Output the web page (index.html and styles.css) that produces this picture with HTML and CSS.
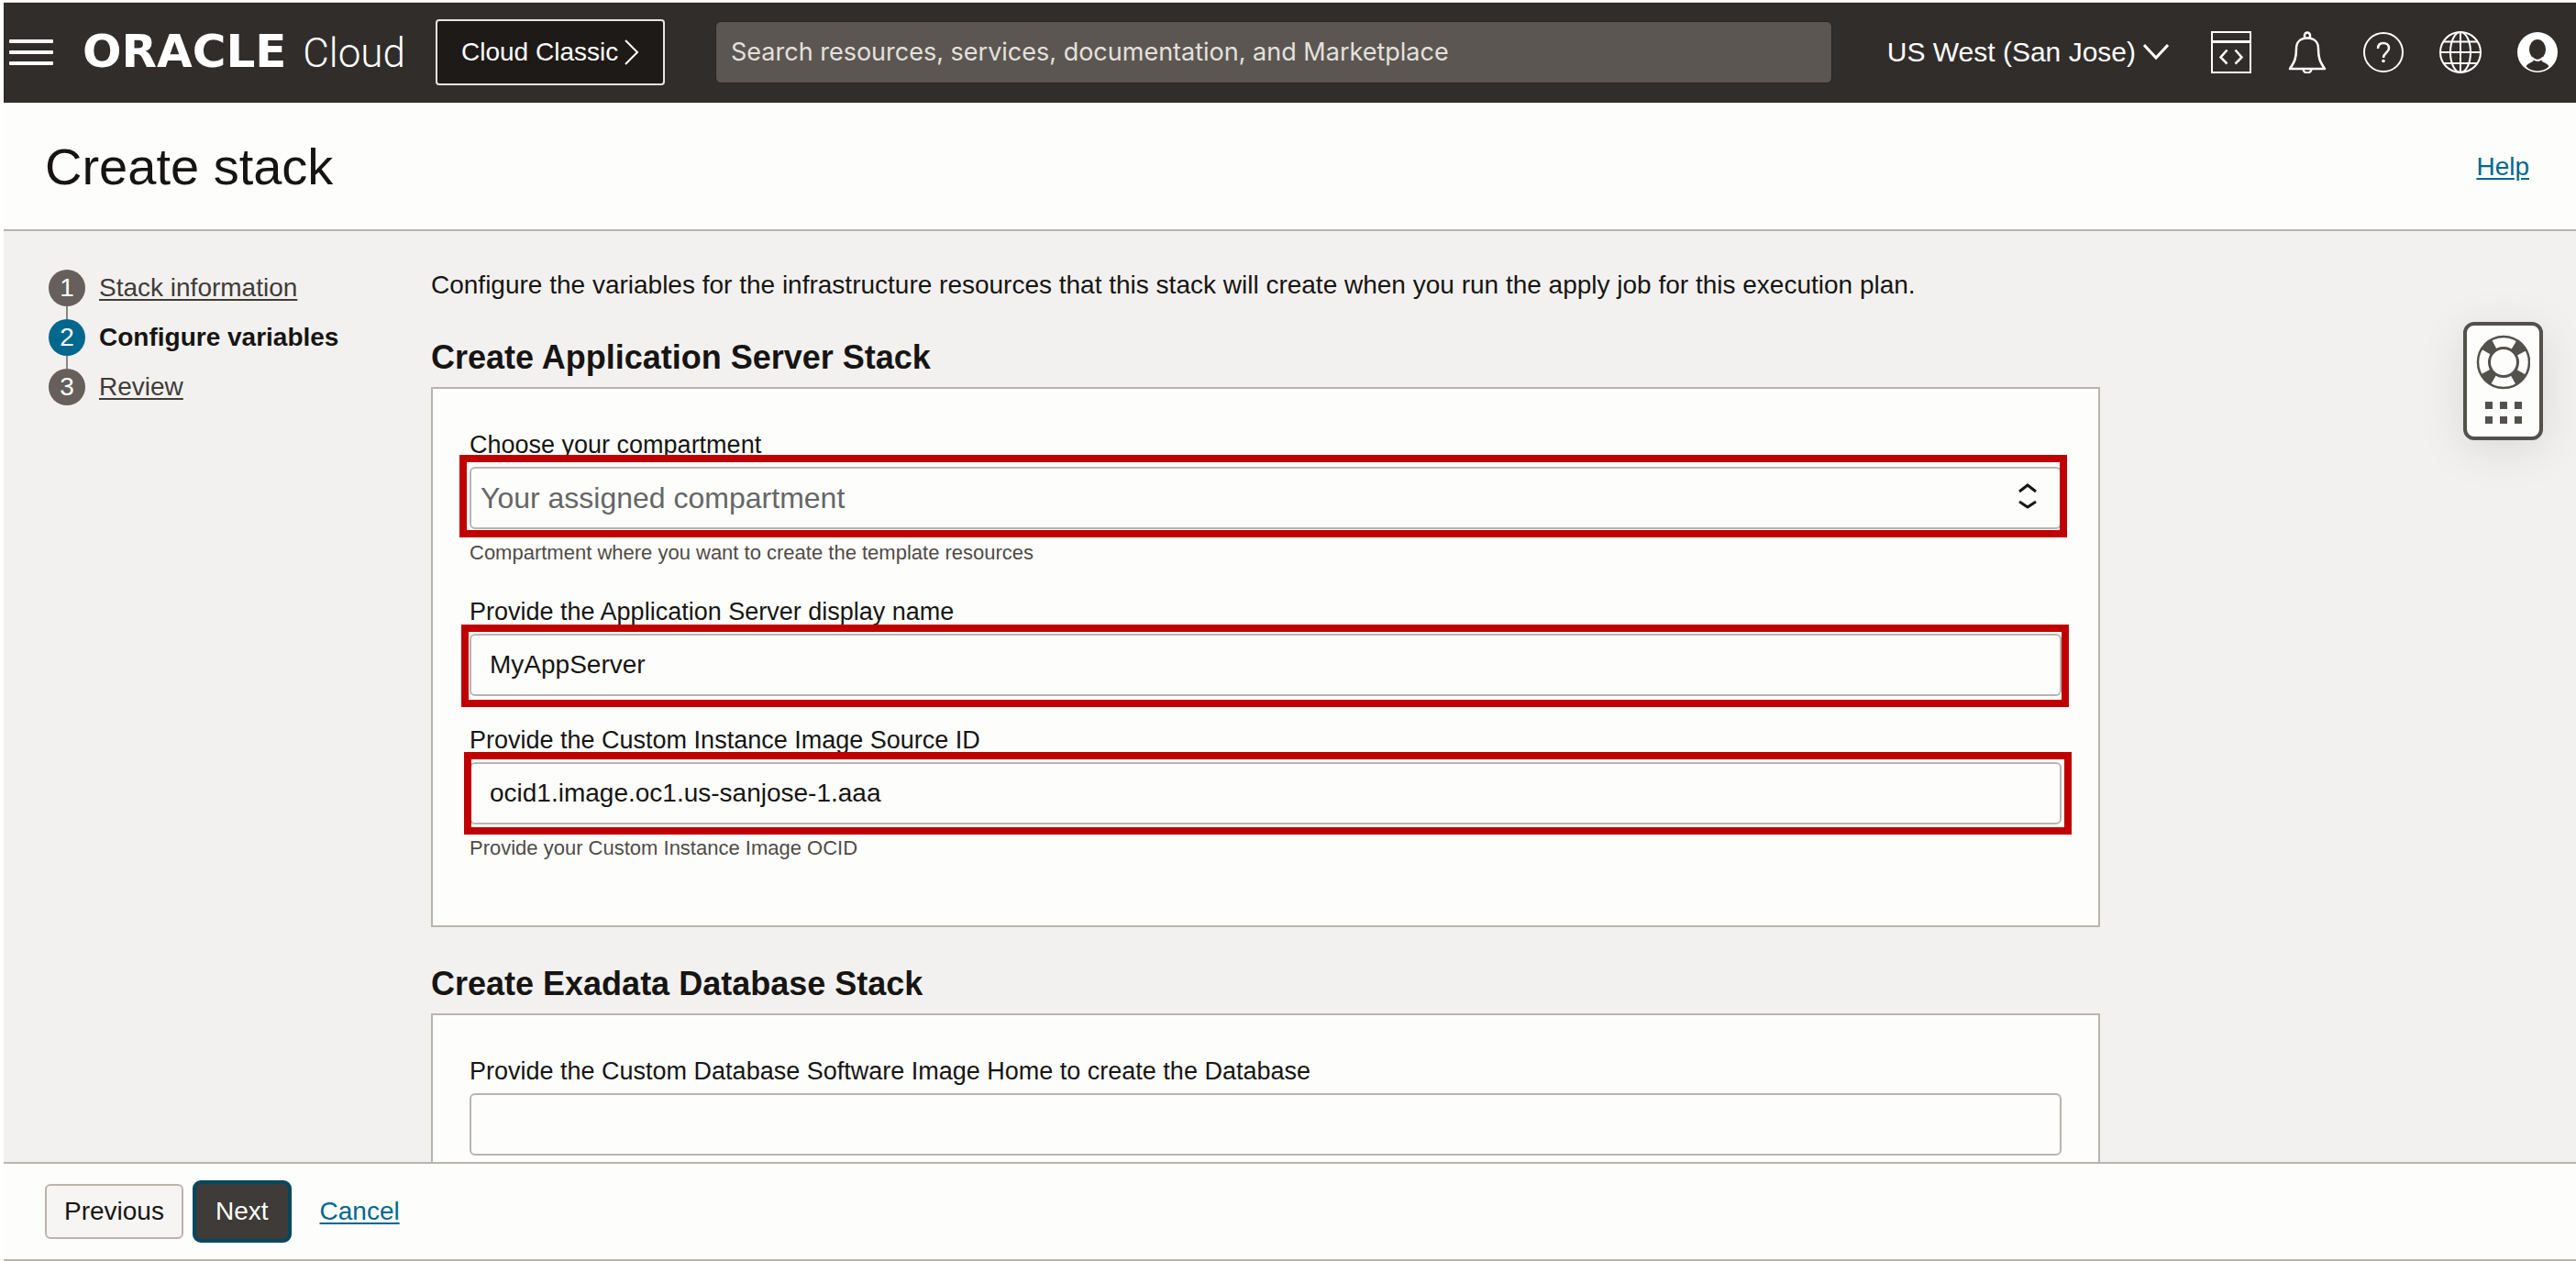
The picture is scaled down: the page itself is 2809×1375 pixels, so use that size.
FILE: index.html
```html
<!DOCTYPE html>
<html lang="en">
<head>
<meta charset="utf-8">
<title>Create stack | Oracle Cloud</title>
<link rel="stylesheet" href="styles.css">
</head>
<body>
<header class="topbar">
  <button class="icon-btn menu-btn" type="button" aria-label="Menu">
    <svg width="48" height="28" viewBox="0 0 48 28" fill="#fff"><rect width="48" height="4" rx="1"/><rect y="12" width="48" height="4" rx="1"/><rect y="24" width="48" height="4" rx="1"/></svg>
  </button>
  <a class="brand" href="#"><span class="brand-name">ORACLE</span><span class="brand-product">Cloud</span></a>
  <button class="classic-btn" type="button">Cloud Classic
    <svg width="16" height="28" viewBox="0 0 16 28" fill="none" stroke="#fff" stroke-width="2"><path d="M1 1l13 13L1 27"/></svg>
  </button>
  <input class="search" type="search" aria-label="Search" placeholder="Search resources, services, documentation, and Marketplace">
  <button class="region-btn" type="button">US West (San Jose)
    <svg width="28" height="18" viewBox="0 0 28 18" fill="none" stroke="#fff" stroke-width="3"><path d="M1 1l13 14L27 1"/></svg>
  </button>
  <nav class="tools" aria-label="Tools">
    <button class="icon-btn" type="button" aria-label="Developer tools">
      <svg width="44" height="46" viewBox="0 0 44 46" fill="none" stroke="#fff" stroke-width="2"><rect x="1" y="1" width="42" height="44"/><path d="M1 11.500h42" stroke-width="3"/><path d="M17.500 20.500l-7 8 7 7M26.500 20.500l7 8-7 7" stroke-width="2.500"/></svg>
    </button>
    <button class="icon-btn" type="button" aria-label="Announcements">
      <svg width="44" height="46" viewBox="0 0 44 46" fill="none" stroke="#fff" stroke-width="2.500" stroke-linejoin="round"><path d="M19 8V4.500a3 3 0 0 1 6 0V8"/><path d="M22 7.500c-8 0-12 5-12 11.500 0 10-1.500 14-7 22h38c-5.500-8-7-12-7-22 0-6.500-4-11.500-12-11.500z"/><path d="M17.500 41a4.500 4.500 0 0 0 9 0"/></svg>
    </button>
    <button class="icon-btn" type="button" aria-label="Help menu">
      <svg width="44" height="46" viewBox="0 0 44 46" fill="none" stroke="#fff" stroke-width="2"><circle cx="22" cy="23" r="21"/><path d="M16 19c0-4 2.500-6 6-6s6 2 6 5.500c0 5-6 5-6 10.500" stroke-width="2.500"/><circle cx="22" cy="32.500" r="1.800" fill="#fff" stroke="none"/></svg>
    </button>
    <button class="icon-btn" type="button" aria-label="Language">
      <svg width="46" height="46" viewBox="0 0 46 46" fill="none" stroke="#fff" stroke-width="2"><circle cx="23" cy="23" r="22"/><ellipse cx="23" cy="23" rx="11" ry="22"/><path d="M23 1v44M1 23h44M5 11.500h36M5 35h36"/></svg>
    </button>
    <button class="icon-btn" type="button" aria-label="Profile">
      <svg width="44" height="46" viewBox="0 0 44 46"><circle cx="22" cy="23" r="22" fill="#fff"/><ellipse cx="22" cy="20" rx="9" ry="11" fill="#312d2a"/><path d="M9.500 38.500c1-2.500 4-3.500 7.500-5.500l1-2c2.500 2 5.500 2 8 0l1 2c3.500 2 6.500 3 7.500 5.500-7 6.500-18 6.500-25 0z" fill="#312d2a"/><path d="M16 28.500c3.500 4.500 8.500 4.500 12 0" fill="none" stroke="#fff" stroke-width="2"/></svg>
    </button>
  </nav>
</header>

<div class="titlebar">
  <h1>Create stack</h1>
  <a class="link" href="#">Help</a>
</div>

<main class="workspace">
  <ol class="steps">
    <li class="step"><span class="step-num">1</span><a href="#">Stack information</a></li>
    <li class="step step-current" aria-current="step"><span class="step-num">2</span><strong>Configure variables</strong></li>
    <li class="step"><span class="step-num">3</span><a href="#">Review</a></li>
  </ol>

  <form class="content" id="stack-form">
    <p class="intro">Configure the variables for the infrastructure resources that this stack will create when you run the apply job for this execution plan.</p>

    <section class="group">
      <h2>Create Application Server Stack</h2>
      <div class="panel">
        <div class="field">
          <label for="compartment">Choose your compartment</label>
          <div class="control mark mark-compartment">
            <select id="compartment"><option>Your assigned compartment</option></select>
            <svg class="select-arrows" width="20" height="28" viewBox="0 0 20 28" fill="none" stroke="#161513" stroke-width="3"><path d="M1 9l9-7 9 7M1 20l9 6 9-6"/></svg>
          </div>
          <p class="hint">Compartment where you want to create the template resources</p>
        </div>
        <div class="field">
          <label for="display-name">Provide the Application Server display name</label>
          <div class="control mark mark-name"><input id="display-name" type="text" value="MyAppServer"></div>
        </div>
        <div class="field">
          <label for="image-id">Provide the Custom Instance Image Source ID</label>
          <div class="control mark mark-image"><input id="image-id" type="text" value="ocid1.image.oc1.us-sanjose-1.aaa"></div>
          <p class="hint">Provide your Custom Instance Image OCID</p>
        </div>
      </div>
    </section>

    <section class="group">
      <h2>Create Exadata Database Stack</h2>
      <div class="panel">
        <div class="field">
          <label for="db-home">Provide the Custom Database Software Image Home to create the Database</label>
          <div class="control"><input id="db-home" type="text"></div>
        </div>
      </div>
    </section>
  </form>

  <button class="support" type="button" aria-label="Support">
    <svg width="59" height="97" viewBox="0 0 59 97" fill="none" stroke="#53514c"><circle cx="30" cy="30" r="22" stroke-width="13" stroke-dasharray="12 22.560" stroke-dashoffset="-11.280"/><circle cx="30" cy="30" r="28" stroke-width="2.500"/><circle cx="30" cy="30" r="15.500" stroke-width="3"/><g fill="#53514c" stroke="none"><rect x="10" y="73" width="8" height="8"/><rect x="26" y="73" width="8" height="8"/><rect x="42" y="73" width="8" height="8"/><rect x="10" y="89" width="8" height="8"/><rect x="26" y="89" width="8" height="8"/><rect x="42" y="89" width="8" height="8"/></g></svg>
  </button>
</main>

<footer class="actions">
  <button class="btn" type="button">Previous</button>
  <button class="btn btn-primary" type="submit" form="stack-form">Next</button>
  <a class="link" href="#">Cancel</a>
</footer>
</body>
</html>
```
FILE: styles.css
```css
*, *::before, *::after { box-sizing: border-box; }

body {
  display: flex;
  flex-direction: column;
  height: 100vh;
  margin: 0;
  padding: 2px 0 0 4px;
  overflow: hidden;
  background: #fff;
  color: #161513;
  font-family: "Liberation Sans", Arial, sans-serif;
  font-size: 28px;
  line-height: 32px;
}

h1, h2, p, ol { margin: 0; padding: 0; }
h1 { font-size: 56px; line-height: 64px; font-weight: 400; }
h2 { font-size: 36px; line-height: 40px; font-weight: 700; }
button, input, select { font: inherit; color: inherit; }
svg { display: block; flex: none; }

.link { color: #00688c; text-decoration-thickness: 2px; text-underline-offset: 3px; }

/* Top bar */
.topbar {
  display: flex;
  flex: none;
  align-items: center;
  height: 110px;
  padding: 0 20px 2px 6px;
  border-top: 1px solid #d9d7d5;
  background: #312d2a;
  color: #fff;
}
.icon-btn { padding: 0; border: 0; background: none; }
.menu-btn { margin-right: 32px; }
.brand {
  display: flex;
  flex: none;
  align-items: baseline;
  justify-content: space-between;
  width: 352px;
  margin-right: 33px;
  color: inherit;
  text-decoration: none;
}
.brand-name { font: 700 50px/56px "DejaVu Sans", sans-serif; }
.brand-product { font: 300 44px/56px Roboto, sans-serif; }
.classic-btn {
  display: flex;
  flex: none;
  align-items: center;
  justify-content: space-between;
  width: 250px;
  height: 72px;
  margin-right: 55px;
  padding: 0 26px;
  border: 2px solid #e8e5e2;
  border-radius: 4px;
  background: #1e1a17;
}
.search {
  flex: 1;
  min-width: 0;
  height: 68px;
  margin-right: 60px;
  padding: 0 16px;
  border: 1px solid #27231f;
  border-radius: 6px;
  background: #5b5652;
  font-family: Inter, sans-serif;
  font-size: 27px;
  appearance: none;
}
.search::placeholder { color: #e4e1dd; opacity: 1; }
.region-btn {
  display: flex;
  flex: none;
  align-items: center;
  gap: 8px;
  margin-right: 46px;
  padding: 0;
  border: 0;
  background: none;
  font-size: 30px;
}
.tools { display: flex; gap: 39px; }

/* Page title */
.titlebar {
  display: flex;
  flex: none;
  align-items: center;
  justify-content: space-between;
  height: 140px;
  padding: 2px 51px 0 45px;
  border-bottom: 2px solid #bab4af;
  background: #fdfdfc;
}

/* Workspace */
.workspace {
  position: relative;
  display: flex;
  flex: 1;
  min-height: 0;
  padding: 42px 50px 0 49px;
  overflow: hidden;
  background: #f3f1f0;
}
.steps {
  display: flex;
  flex: none;
  flex-direction: column;
  gap: 14px;
  width: 417px;
  list-style: none;
}
.step { position: relative; display: flex; align-items: center; gap: 15px; }
.step a { color: #403c38; text-decoration-thickness: 2px; text-underline-offset: 3px; }
.step + .step::before {
  content: "";
  position: absolute;
  left: 19px;
  bottom: 100%;
  width: 2px;
  height: 14px;
  background: #8b8580;
}
.step-num {
  width: 40px;
  border-radius: 50%;
  background: #665f5b;
  color: #fff;
  line-height: 40px;
  text-align: center;
}
.step-current .step-num { background: #00688c; }

.content { flex: 0 1 1820px; }
.intro { line-height: 34px; }
.group { margin-top: 42px; }
.panel {
  display: flex;
  flex-direction: column;
  gap: 32px;
  margin-top: 12px;
  padding: 45px 40px 68px;
  border: 2px solid #bab4af;
  background: #fdfdfc;
}
.field label { display: block; margin-bottom: 8px; font-size: 27px; }
.control { position: relative; }
.control input,
.control select {
  display: block;
  width: 100%;
  height: 68px;
  padding: 0 20px;
  border: 2px solid #bab4af;
  border-radius: 6px;
  background: #fdfdfc;
  appearance: none;
}
.control select { padding: 0 10px; color: #666; font-size: 32px; line-height: 40px; }
.select-arrows { position: absolute; top: 18px; right: 27px; pointer-events: none; }
.hint { margin-top: 10px; color: #4f4b47; font-size: 22px; line-height: 32px; }

/* Red callout frames drawn over the fields */
.mark::after {
  content: "";
  position: absolute;
  height: 90px;
  border: 8px solid #c00000;
  pointer-events: none;
}
.mark-compartment::after { inset: -13px -6px auto -11px; }
.mark-name::after { inset: -10px -8px auto -9px; }
.mark-image::after { inset: -11px -11px auto -6px; }

/* Floating support launcher */
.support {
  position: absolute;
  top: 99px;
  right: 36px;
  padding: 10px 10px 14px;
  border: 4px solid #53514c;
  border-radius: 12px;
  background: #fdfdfc;
  box-shadow: 0 10px 50px rgba(0, 0, 0, 0.1);
}

/* Footer actions */
.actions {
  display: flex;
  flex: none;
  align-items: center;
  padding: 18px 45px;
  border: solid #bab4af;
  border-width: 2px 0;
  background: #fdfdfc;
}
.btn {
  height: 60px;
  margin-right: 10px;
  padding: 0 19px;
  border: 2px solid #bab4af;
  border-radius: 6px;
  background: #f7f5f4;
}
.btn-primary {
  height: 68px;
  margin-right: 31px;
  padding: 0 21px;
  border: 4px solid #03485e;
  border-radius: 9px;
  background: #3e3b38;
  color: #fff;
}
```
